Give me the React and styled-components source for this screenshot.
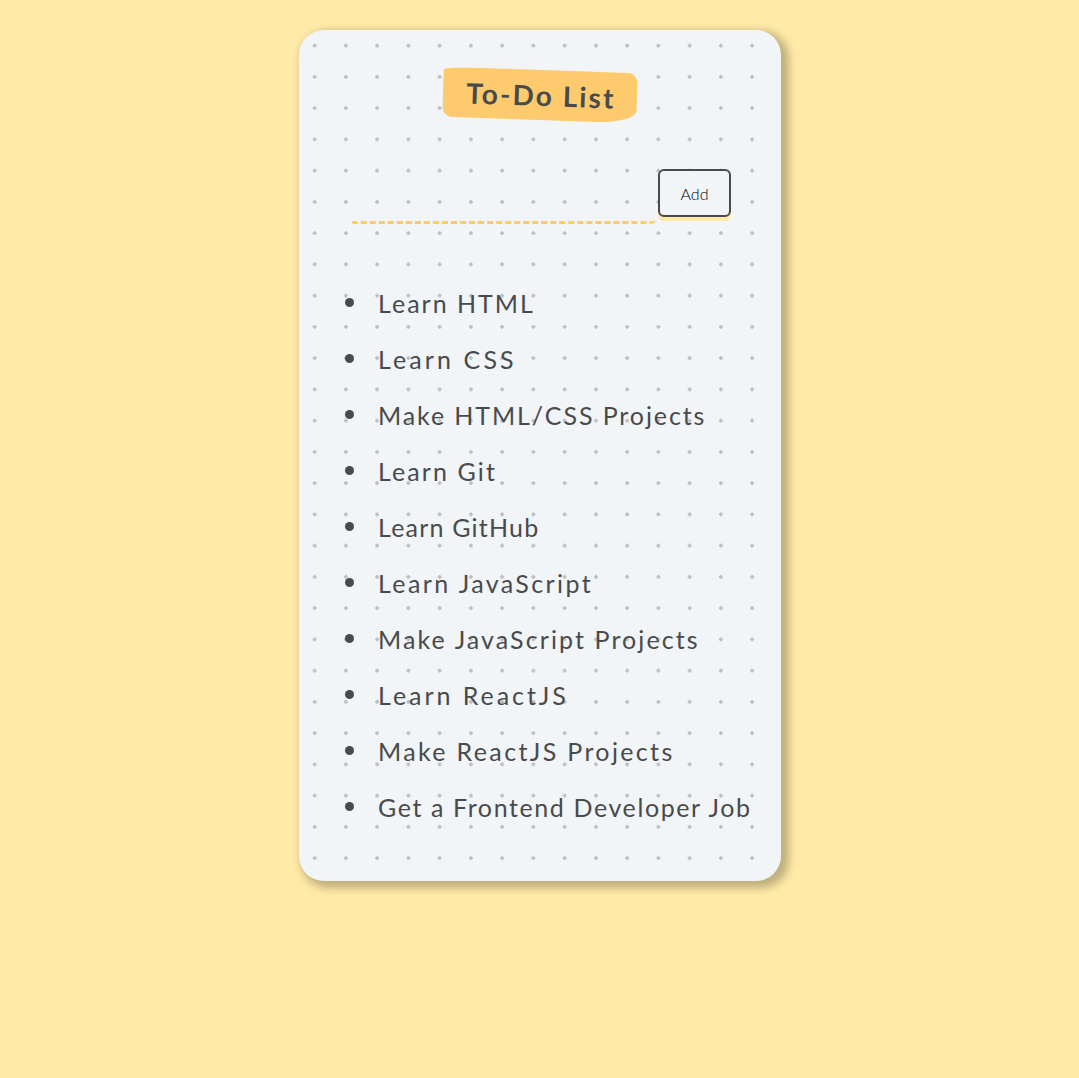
import React, { useState } from "react";
import styled, { createGlobalStyle } from "styled-components";

const GlobalStyle = createGlobalStyle`
  *, *::before { box-sizing: border-box; }
  body {
    margin: 0;
    min-height: 100vh;
    background: #ffeaa7;
    color: #494a4b;
    font-family: Lato, "Open Sans", sans-serif;
  }
`;

const Page = styled.main`
  display: flex;
  justify-content: center;
  padding: 30px 0 0 1px;
`;

const Card = styled.section`
  display: flex;
  flex-direction: column;
  align-items: center;
  width: 482px;
  height: 851px;
  padding-top: 40px;
  border-radius: 25px;
  background-color: #f1f5f8;
  background-image: radial-gradient(#bfc0c1 7.2%, transparent 0);
  background-size: 31.25px 31.25px;
  box-shadow: 5px 3.75px 8.75px 2.5px #00000040;
`;

const Title = styled.h1`
  display: flex;
  align-items: center;
  justify-content: center;
  width: 194px;
  height: 50px;
  margin: 0;
  padding-left: 2px;
  border-radius: 20% 5% 20% 5% / 5% 20% 25% 20%;
  background: #fdcb6e;
  font-size: 28px;
  font-weight: 700;
  line-height: 1;
  letter-spacing: 2.1px;
  transform: rotate(2deg);
`;

const EntryForm = styled.form`
  display: flex;
  align-items: flex-start;
  justify-content: space-between;
  width: 382px;
  height: 55px;
  margin-top: 49px;
`;

const EntryInput = styled.input`
  width: 307px;
  height: 55px;
  padding: 8px;
  border: 0;
  border-bottom: 3px dashed #fdcb6e;
  border-radius: 5px;
  outline: 0;
  background: transparent;
  color: inherit;
  font: inherit;
  font-size: 25px;
`;

const AddButton = styled.button`
  width: 73px;
  height: 48px;
  padding: 0;
  border: 2px solid #494a4b;
  border-radius: 6px;
  background: #f1f5f8;
  box-shadow: 0 4px 0 #ffeaa7;
  color: #000;
  font: inherit;
  font-size: 16px;
  font-weight: 300;
`;

const List = styled.ul`
  width: 100%;
  margin: 50px 0 0;
  padding: 0 0 0 46px;
  list-style: none;
`;

const Item = styled.li`
  display: flex;
  align-items: center;
  gap: 24px;
  height: 56px;
  padding-top: 1px;
  font-size: 25px;
  line-height: 30px;
  letter-spacing: ${(p) => p.$tracking}px;
  white-space: nowrap;

  &::before {
    content: "";
    flex: none;
    width: 9px;
    height: 9px;
    border-radius: 50%;
    background: #494a4b;
  }
`;

const tasks = [
  { text: "Learn HTML", tracking: 2 },
  { text: "Learn CSS", tracking: 3.1 },
  { text: "Make HTML/CSS Projects", tracking: 1.9 },
  { text: "Learn Git", tracking: 2.1 },
  { text: "Learn GitHub", tracking: 1.2 },
  { text: "Learn JavaScript", tracking: 2.4 },
  { text: "Make JavaScript Projects", tracking: 2.1 },
  { text: "Learn ReactJS", tracking: 2.95 },
  { text: "Make ReactJS Projects", tracking: 2.35 },
  { text: "Get a Frontend Developer Job", tracking: 1.6 },
];

export default function App() {
  const [items, setItems] = useState(tasks);
  const [draft, setDraft] = useState("");

  const addItem = (event) => {
    event.preventDefault();
    if (!draft.trim()) return;
    setItems([...items, { text: draft.trim(), tracking: 2 }]);
    setDraft("");
  };

  return (
    <Page>
      <GlobalStyle />
      <Card>
        <Title>To-Do List</Title>
        <EntryForm onSubmit={addItem}>
          <EntryInput value={draft} onChange={(e) => setDraft(e.target.value)} />
          <AddButton type="submit">Add</AddButton>
        </EntryForm>
        <List>
          {items.map((item, index) => (
            <Item key={index} $tracking={item.tracking}>{item.text}</Item>
          ))}
        </List>
      </Card>
    </Page>
  );
}
